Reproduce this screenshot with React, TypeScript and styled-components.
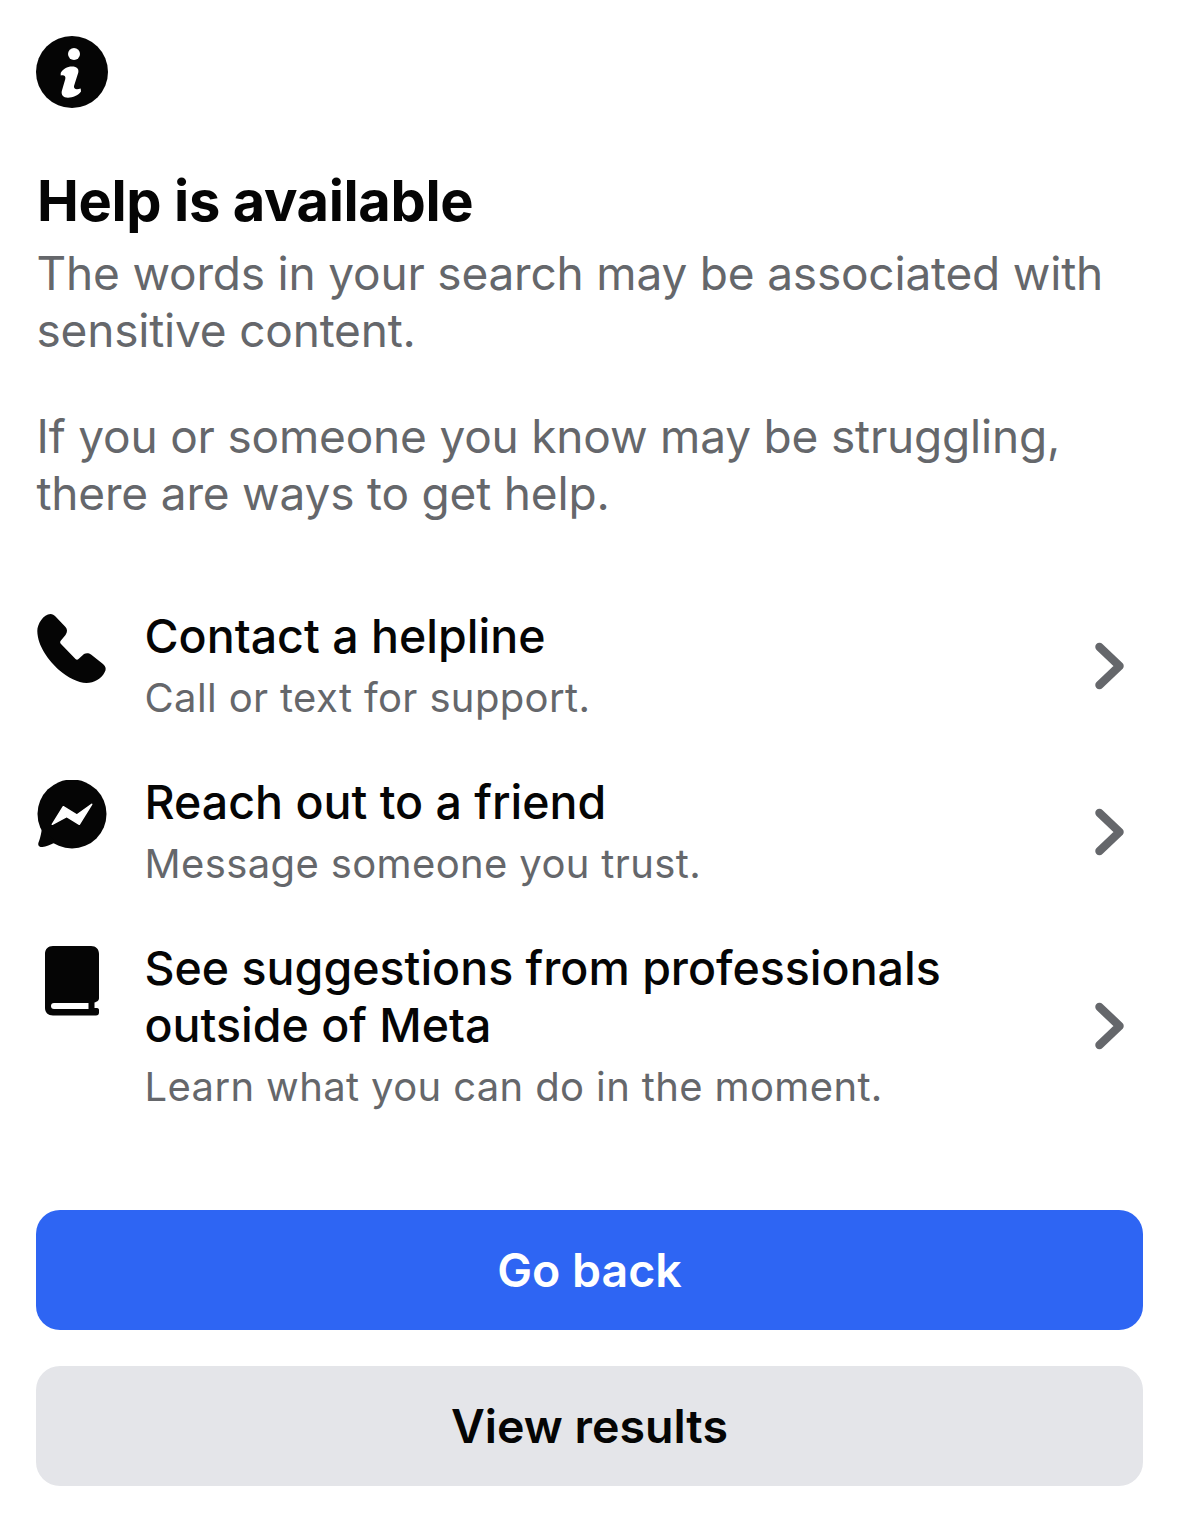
import React from "react";
import styled, { createGlobalStyle } from "styled-components";

const Global = createGlobalStyle`
  html, body { margin: 0; padding: 0; background: #fff; }
  body { font-family: Inter, "Liberation Sans", sans-serif; }
`;

const Page = styled.div`
  width: 1179px;
  height: 1514px;
  box-sizing: border-box;
  padding: 36px 36px 0;
  display: flex;
  flex-direction: column;
  overflow: hidden;
`;

const HeaderIcon = styled.svg`
  width: 72px;
  height: 72px;
  display: block;
`;

const Title = styled.h1`
  margin: 63px 0 0 1px;
  font-size: 56px;
  line-height: 60px;
  font-weight: 700;
  letter-spacing: -0.37px;
  color: #050505;
`;

const Paragraph = styled.p<{ $gap: number }>`
  margin: ${(p) => p.$gap}px 0 0 0.5px;
  font-size: 46px;
  line-height: 57px;
  font-weight: 400;
  letter-spacing: -0.19px;
  color: #65676b;
`;

const Options = styled.div`
  margin-top: 86px;
  display: flex;
  flex-direction: column;
  gap: 51px;
`;

const Option = styled.div`
  display: flex;
  align-items: flex-start;
`;

const OptionIcon = styled.svg`
  width: 72px;
  height: 72px;
  flex: none;
  display: block;
  margin-top: 6px;
`;

const OptionText = styled.div`
  margin-left: 36.5px;
  flex: 1;
  min-width: 0;
`;

const OptionTitle = styled.div`
  font-size: 46.5px;
  line-height: 57px;
  font-weight: 500;
  color: #050505;
`;

const OptionSub = styled.div`
  margin-top: 8px;
  font-size: 40px;
  line-height: 50px;
  letter-spacing: 0.37px;
  color: #65676b;
`;

const Chevron = styled.svg`
  width: 32px;
  height: 50px;
  flex: none;
  align-self: center;
  margin-right: 17px;
  display: block;
`;

const Buttons = styled.div`
  margin-top: 98px;
  display: flex;
  flex-direction: column;
  gap: 36px;
`;

const Button = styled.div<{ $primary?: boolean }>`
  height: 120px;
  border-radius: 24px;
  display: flex;
  align-items: center;
  justify-content: center;
  font-size: 46.5px;
  font-weight: 600;
  background: ${(p) => (p.$primary ? "#2e65f3" : "#e4e5e9")};
  color: ${(p) => (p.$primary ? "#fff" : "#050505")};
`;

const ChevronIcon = () => (
  <Chevron viewBox="0 0 32 50">
    <path d="M5.5 6 L25.5 25 L5.5 44" fill="none" stroke="#65676b" strokeWidth="8.5" strokeLinecap="round" strokeLinejoin="round" />
  </Chevron>
);

export default function App() {
  return (
    <Page>
      <Global />
      <HeaderIcon viewBox="0 0 72 72">
        <circle cx="36" cy="36" r="36" fill="#050505" />
        <circle cx="38" cy="18" r="6" fill="#fff" />
        <path d="M24.7 37 C27 33 31 30.5 36 30.5 C41 30.5 43 33 42.3 36.5 L38 50 C37.5 53 40 54 44.7 52.5 L45 55.5 C42 59.5 37 61.7 32 61.7 C27 61.7 25 58.5 25.8 55 L29.3 43 C30 40 28 38.5 24.7 39.5 Z" fill="#fff" />
      </HeaderIcon>
      <Title>Help is available</Title>
      <Paragraph $gap={14}>The words in your search may be associated with sensitive content.</Paragraph>
      <Paragraph $gap={49}>If you or someone you know may be struggling, there are ways to get help.</Paragraph>
      <Options>
        <Option>
          <OptionIcon viewBox="0 0 72 72">
            <path d="M14.5 0 C16.5 0 18 1 19.5 2.5 L29.5 13 C31.5 15 31.5 18 29.5 21 L24.5 27 C24 28 24 29 25 30 L39.5 45 C40.5 46 41.5 46 42.5 45 L48 40 C50 39 53 39 55 40.5 L67 50 C70 52.5 70.5 55.5 68.5 58.5 C65.5 64.5 58 69 50.5 69 C42 69 32 63.5 23 56 C13 47 1.5 32 1.3 17 C1.3 10 7.5 0 14.5 0 Z" fill="#050505" />
          </OptionIcon>
          <OptionText>
            <OptionTitle>Contact a helpline</OptionTitle>
            <OptionSub>Call or text for support.</OptionSub>
          </OptionText>
          <ChevronIcon />
        </Option>
        <Option>
          <OptionIcon viewBox="0 0 72 72">
            <circle cx="36" cy="34" r="34.5" fill="#050505" />
            <path d="M6 48 C5 55 4 59 2.5 62.5 C1.5 65.5 3.5 67.5 6.5 67 C10 66.5 14 65 20 62 Z" fill="#050505" />
            <path d="M16.3 44.3 L27.3 26.7 L40.7 35 L55.7 24.3 L43.3 44.3 L30.7 36.7 Z" fill="#fff" stroke="#fff" strokeWidth="1.5" strokeLinejoin="round" />
          </OptionIcon>
          <OptionText>
            <OptionTitle>Reach out to a friend</OptionTitle>
            <OptionSub>Message someone you trust.</OptionSub>
          </OptionText>
          <ChevronIcon />
        </Option>
        <Option>
          <OptionIcon viewBox="0 0 72 72">
            <path d="M17 0 H55 C60 0 63 3 63 8 V52 C63 55 61 55.5 58.5 56.5 V62 H61 C62.5 62 63 63 63 64 V66.5 C63 68.5 62 69.5 60 69.5 H17 C12 69.5 9 66.5 9 62 V8 C9 3 12 0 17 0 Z" fill="#050505" />
            <path d="M18 57 H52.5 V63 H18 C16 63 15 62 15 60 C15 58 16 57 18 57 Z" fill="#fff" />
          </OptionIcon>
          <OptionText>
            <OptionTitle>See suggestions from professionals outside of Meta</OptionTitle>
            <OptionSub>Learn what you can do in the moment.</OptionSub>
          </OptionText>
          <ChevronIcon />
        </Option>
      </Options>
      <Buttons>
        <Button $primary>Go back</Button>
        <Button>View results</Button>
      </Buttons>
    </Page>
  );
}
